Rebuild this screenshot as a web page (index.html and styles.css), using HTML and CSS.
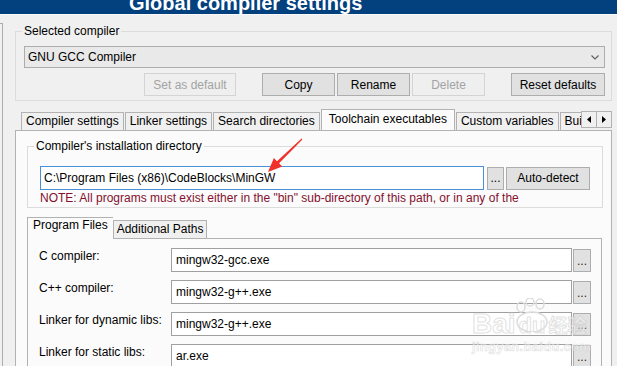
FILE: index.html
```html
<!DOCTYPE html>
<html>
<head>
<meta charset="utf-8">
<title>Global compiler settings</title>
<link rel="stylesheet" href="styles.css">
</head>
<body>
<div class="titlebar"><span class="title">Global compiler settings</span></div>
<div class="main">
  <div class="sidebar"></div>
  <div class="content">
    <fieldset class="group group-compiler">
      <legend>Selected compiler</legend>
      <div class="combo">
        <span class="combo-text">GNU GCC Compiler</span>
        <svg class="chevron" width="8" height="5" viewBox="0 0 8 5"><polyline points="0.5,0.5 4,4 7.5,0.5" fill="none" stroke="#606060" stroke-width="1.2"/></svg>
      </div>
      <div class="btnrow">
        <button class="btn btn-setdef" disabled>Set as default</button>
        <button class="btn btn-copy">Copy</button>
        <button class="btn btn-mid">Rename</button>
        <button class="btn btn-mid" disabled>Delete</button>
        <button class="btn btn-reset">Reset defaults</button>
      </div>
    </fieldset>

    <div class="notebook">
      <div class="tabbar">
        <div class="tabs">
          <div class="tab">Compiler settings</div>
          <div class="tab">Linker settings</div>
          <div class="tab">Search directories</div>
          <div class="tab tab-active">Toolchain executables</div>
          <div class="tab">Custom variables</div>
          <div class="tab">Build options</div>
        </div>
        <div class="spin">
          <div class="spin-btn"><svg width="4" height="7" viewBox="0 0 4 7"><polygon points="4,0 0,3.5 4,7" fill="#000"/></svg></div>
          <div class="spin-btn"><svg width="4" height="7" viewBox="0 0 4 7"><polygon points="0,0 4,3.5 0,7" fill="#000"/></svg></div>
        </div>
      </div>
      <div class="page">
        <fieldset class="group group-dir">
          <legend>Compiler's installation directory</legend>
          <div class="pathrow">
            <div class="field field-focus">C:\Program Files (x86)\CodeBlocks\MinGW</div>
            <button class="btn btn-dots">...</button>
            <button class="btn btn-auto">Auto-detect</button>
          </div>
          <div class="note">NOTE: All programs must exist either in the "bin" sub-directory of this path, or in any of the</div>
        </fieldset>

        <div class="subnb">
          <div class="subtabs">
            <div class="subtab subtab-active">Program Files</div>
            <div class="subtab">Additional Paths</div>
          </div>
          <div class="subpage">
            <div class="progrid">
              <div class="plabel">C compiler:</div>
              <div class="field">mingw32-gcc.exe</div>
              <button class="btn btn-small">...</button>

              <div class="plabel">C++ compiler:</div>
              <div class="field">mingw32-g++.exe</div>
              <button class="btn btn-small">...</button>

              <div class="plabel">Linker for dynamic libs:</div>
              <div class="field">mingw32-g++.exe</div>
              <button class="btn btn-small">...</button>

              <div class="plabel">Linker for static libs:</div>
              <div class="field">ar.exe</div>
              <button class="btn btn-small">...</button>
            </div>
          </div>
        </div>
      </div>
    </div>
  </div>
</div>

<svg class="annot-arrow" width="50" height="45" viewBox="262 134 50 45">
  <polygon points="302.4,139.4 301.6,138.6 277,161.2 273.9,157.9 268,172 282.2,166.5 279.1,163.3" fill="#f0302a"/>
</svg>

<div class="watermark">
  <svg class="wm-paw" width="40" height="34" viewBox="0 0 40 34">
    <ellipse cx="9" cy="9" rx="4" ry="5" fill="none" stroke="#dcdcdc" stroke-width="1.5"/>
    <ellipse cx="18" cy="4" rx="4" ry="4" fill="none" stroke="#dcdcdc" stroke-width="1.5"/>
    <ellipse cx="28" cy="6" rx="4" ry="5" fill="none" stroke="#dcdcdc" stroke-width="1.5"/>
    <ellipse cx="20" cy="24" rx="15" ry="10" fill="none" stroke="#dcdcdc" stroke-width="1.5"/>
  </svg>
  <div class="wm-top"><span class="wm-bai">Bai</span><span class="wm-du">du</span><span class="wm-cn">经验</span></div>
  <div class="wm-url">jingyan.baidu.com</div>
</div>
</body>
</html>
```

FILE: styles.css
```css
* { box-sizing: border-box; }

body {
  margin: 0;
  width: 617px;
  height: 366px;
  overflow: hidden;
  position: relative;
  background: #f0f0f0;
  font: 12px/14px "Liberation Sans", Arial, sans-serif;
  color: #000;
}

/* ---------- title bar ---------- */
.titlebar {
  height: 15px;
  overflow: hidden;
  background: #03407e;
  border-bottom: 1px solid #fafafa;
}
.title {
  display: block;
  margin-top: -7px;
  padding-left: 129px;
  font: bold 20px/20px "Liberation Sans", Arial, sans-serif;
  color: #fff;
  white-space: nowrap;
}

/* ---------- main layout ---------- */
.main {
  display: flex;
  height: 351px;
}
.sidebar {
  width: 3px;
  margin-top: 8px;
  border-top: 1px solid #adadad;
  border-right: 1px solid #adadad;
  flex: none;
}
.content {
  flex: 1;
  min-width: 0;
  padding: 9px 5px 0 12px;
}

/* ---------- group boxes ---------- */
.group {
  margin: 0;
  border: 1px solid #dcdcdc;
  min-width: 0;
}
.group legend {
  padding: 0 2px;
  line-height: 14px;
}
.group-compiler {
  padding: 8px 6px 4px 8px;
}
.group-compiler legend { margin-left: -2px; }

.combo {
  height: 22px;
  border: 1px solid #adadad;
  background: #e9e9e9;
  display: flex;
  align-items: center;
  justify-content: space-between;
  padding: 0 4px 0 3px;
}
.chevron { margin-right: 1px; }

.btnrow {
  display: flex;
  justify-content: flex-end;
  margin-top: 5px;
}

.btn {
  font: inherit;
  color: #000;
  height: 23px;
  padding: 0;
  background: #e1e1e1;
  border: 1px solid #adadad;
  border-radius: 0;
  text-align: center;
  line-height: 20px;
}
.btn:disabled {
  color: #a3a3a3;
  background: #efefef;
  border-color: #d4d4d4;
}
.btn-setdef { width: 92px; }
.btn-copy { width: 73px; margin-left: 26px; }
.btn-mid { width: 73px; margin-left: 2px; }
.btn-reset { width: 94px; margin-left: 26px; }

/* ---------- notebook ---------- */
.notebook {
  margin-top: 8px;
}
.tabbar {
  display: flex;
  height: 21px;
}
.tabs {
  flex: 1;
  min-width: 0;
  display: flex;
  align-items: flex-end;
  gap: 1px;
  padding-left: 6px;
  overflow: hidden;
  white-space: nowrap;
}
.tab {
  flex: none;
  height: 18px;
  padding: 0 4px;
  line-height: 16px;
  border: 1px solid #b2b2b2;
  border-bottom: none;
  background: #f0f0f0;
}
.tab-active {
  position: relative;
  z-index: 1;
  height: 22px;
  margin-bottom: -1px;
  padding: 0 7px;
  line-height: 18px;
  background: #fbfbfb;
}
.spin {
  flex: none;
  display: flex;
  margin-top: 2px;
  height: 17px;
}
.spin-btn {
  width: 16px;
  height: 17px;
  border: 1px solid #b2b2b2;
  background: #f0f0f0;
  display: flex;
  align-items: center;
  justify-content: center;
}
.spin-btn + .spin-btn { width: 15px; border-left: none; }

.page {
  border: 1px solid #b2b2b2;
  background: #fbfbfb;
  padding-top: 8px;
  height: 240px;
}

.group-dir {
  margin: 0 8px 0 11px;
  padding: 13px 12px 2px 12px;
}
.group-dir legend { margin-left: -6px; }

.pathrow {
  display: flex;
  align-items: center;
  height: 24px;
}
.field {
  height: 24px;
  border: 1px solid #a0a0a0;
  background: #fff;
  padding: 0 4px;
  line-height: 22px;
  white-space: nowrap;
  overflow: hidden;
}
.field-focus {
  flex: 1;
  border-color: #4a90d9;
  padding-left: 3px;
}
.btn-dots { width: 17px; margin-left: 3px; }
.btn-auto { width: 84px; margin-left: 2px; }

.note {
  margin-top: 1px;
  color: #83102e;
  white-space: nowrap;
  overflow: hidden;
  height: 14px;
}

/* ---------- inner notebook ---------- */
.subnb {
  margin: 9px 9px 0 11px;
}
.subtabs {
  display: flex;
  align-items: flex-end;
  height: 21px;
}
.subtab {
  height: 18px;
  padding: 0 3px;
  line-height: 17px;
  border: 1px solid #b2b2b2;
  border-bottom: none;
  background: #f0f0f0;
  white-space: nowrap;
}
.subtab-active {
  position: relative;
  z-index: 1;
  height: 22px;
  margin-bottom: -1px;
  padding: 0 5px;
  line-height: 15px;
  border-right: none;
  background: #fbfbfb;
}
.subpage {
  border: 1px solid #b2b2b2;
  background: #fbfbfb;
  padding: 9px 10px 0 11px;
  height: 140px;
}
.progrid {
  display: grid;
  grid-template-columns: 131px 1fr 18px;
  column-gap: 1px;
  row-gap: 8px;
}
.plabel {
  padding-top: 1px;
  white-space: nowrap;
}
.btn-small {
  width: 18px;
  height: 23px;
  margin-top: 1px;
  color: #3a2a10;
}

/* ---------- overlays ---------- */
.annot-arrow {
  position: absolute;
  left: 262px;
  top: 134px;
}

.watermark {
  position: absolute;
  left: 472px;
  top: 298px;
  width: 120px;
  pointer-events: none;
}
.wm-paw {
  position: absolute;
  left: 40px;
  top: 0;
}
.wm-top {
  margin-top: 12px;
  display: flex;
  align-items: baseline;
  white-space: nowrap;
}
.wm-bai, .wm-du, .wm-cn {
  color: rgba(255, 255, 255, 0.55);
  -webkit-text-stroke: 1px rgba(195, 195, 195, 0.5);
}
.wm-bai {
  font: bold 28px/28px "Liberation Sans", Arial, sans-serif;
}
.wm-du {
  font: bold 22px/28px "Liberation Sans", Arial, sans-serif;
  margin-left: 3px;
}
.wm-cn {
  font: bold 19px/28px "Noto Sans CJK SC", sans-serif;
  margin-left: 3px;
}
.wm-url {
  font: bold 13px/14px "Liberation Sans", Arial, sans-serif;
  color: rgba(255, 255, 255, 0.5);
  -webkit-text-stroke: 0.7px rgba(195, 195, 195, 0.5);
  letter-spacing: 0.3px;
}
```
